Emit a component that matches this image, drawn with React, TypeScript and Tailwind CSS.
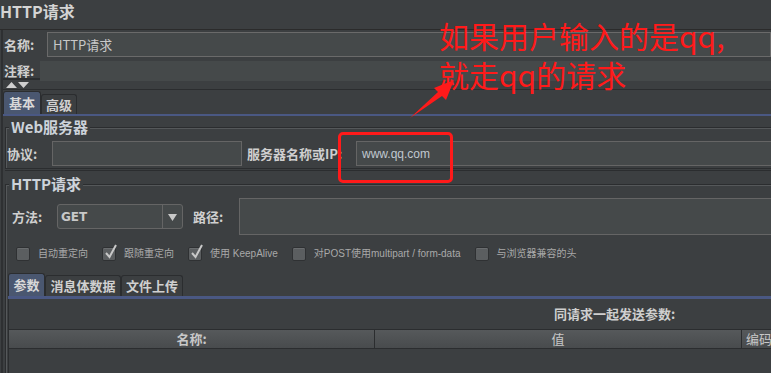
import React from "react";

const F = { fontFamily: '"Noto Sans CJK SC", "Liberation Sans", sans-serif' };

function Box({ checked }: { checked?: boolean }) {
  return (
    <span className="relative w-[14px] h-[14px] bg-[#5b5e60] border border-[#2f3133] rounded-[2px] shrink-0 shadow-[inset_0_1px_0_#6a6d6f]">
      {checked && (
        <svg className="absolute left-[1px] top-[-4px]" width="14" height="16" viewBox="0 0 14 16">
          <path d="M2 9 L5.5 13 L12 1" fill="none" stroke="#c8c8c8" strokeWidth="2" />
        </svg>
      )}
    </span>
  );
}

function Check({ checked, label }: { checked?: boolean; label: string }) {
  return (
    <div className="flex items-center gap-[8px]">
      <Box checked={checked} />
      <span className="text-[10px] text-[#a9a9a9] leading-none whitespace-nowrap" style={{ fontFamily: '"Liberation Sans", "Noto Sans CJK SC", sans-serif' }}>{label}</span>
    </div>
  );
}

export default function App() {
  return (
    <div className="relative w-[771px] h-[373px] bg-[#3c3f41] overflow-hidden text-[#bbbbbb]" style={F}>
      {/* title */}
      <div className="h-[30px] border-b border-[#2b2b2b] flex items-start pt-[1px]">
        <span className="text-[16px] font-bold text-[#d4d4d4] leading-[20px]">HTTP请求</span>
      </div>

      <div className="border-l-2 border-[#2e3032] ml-[1px]">
        {/* name/comment */}
        <div className="h-[50px] border-b-2 border-[#2b2d2f] flex flex-col">
          <div className="flex items-center h-[28px] pt-[2px]">
            <span className="w-[44px] pl-[1px] text-[13px] font-bold text-[#cfcfcf]">名称:</span>
            <div className="flex-1 h-[25px] bg-[#45494a] border border-[#6a6a6a] flex items-center pl-[5px] text-[13px] text-[#c8c8c8]">HTTP请求</div>
          </div>
          <div className="flex items-stretch flex-1 mt-[4px]">
            <span className="w-[37px] pl-[1px] text-[13px] font-bold text-[#cfcfcf] flex items-center">注释:</span>
            <div className="flex-1 bg-[#45494a]" />
          </div>
        </div>
        {/* arrows */}
        <div className="h-[10px] border-b border-[#2b2d2f] flex items-center pl-[2px] gap-0">
          <svg width="26" height="8" viewBox="0 0 26 8">
            <path d="M1 7 L6.5 1 L12 7 Z" fill="#cfcfcf" />
            <path d="M13 1 L24 1 L18.5 7 Z" fill="#cfcfcf" />
          </svg>
        </div>

        {/* tabs basic/advanced */}
        <div className="h-[26px] flex items-end border-b-2 border-[#4a5883]">
          <div className="h-[23px] w-[38px] bg-[#4a5770] border border-[#2b2d2f] border-b-0 rounded-t-[3px] flex items-center justify-center text-[13px] font-bold text-[#d8d8d8]">基本</div>
          <div className="h-[20px] w-[36px] bg-[#3c3f41] border border-[#2b2d2f] border-b-0 rounded-t-[3px] flex items-center justify-center text-[13px] font-bold text-[#d0d0d0]">高级</div>
        </div>

        {/* Web server group */}
        <div className="relative mt-[11px] ml-[2px] h-[42px] border-t border-l border-b border-[#2b2d2f] shadow-[inset_1px_1px_0_#55585a]">
          <span className="absolute left-[3px] top-[-10px] bg-[#3c3f41] px-[2px] text-[15px] font-bold text-[#cdd3da] leading-[17px]">Web服务器</span>
          <div className="flex items-center mt-[13px] h-[25px]">
            <span className="w-[46px] pl-[1px] text-[13px] font-bold text-[#cfcfcf]">协议:</span>
            <div className="w-[190px] h-[25px] bg-[#45494a] border border-[#656565]" />
            <span className="ml-[5px] w-[109px] text-[13px] font-bold text-[#cfcfcf] whitespace-nowrap">服务器名称或IP:</span>
            <div className="flex-1 h-[25px] bg-[#45494a] border border-[#656565] border-r-0 flex items-center pl-[5px] text-[12px] text-[#c0c8d0]" style={{ fontFamily: '"Liberation Sans", sans-serif' }}>www.qq.com</div>
          </div>
        </div>
        <div className="border-b border-[#2b2d2f] ml-[2px] mt-[1px]" />

        {/* HTTP request group */}
        <div className="relative mt-[13px] ml-[2px] h-[200px] border-t border-l border-[#2b2d2f] shadow-[inset_1px_1px_0_#55585a]">
          <span className="absolute left-[3px] top-[-10px] bg-[#3c3f41] px-[2px] text-[15px] font-bold text-[#cdd3da] leading-[17px]">HTTP请求</span>
          <div className="flex items-center mt-[13px] h-[37px]">
            <span className="w-[51px] pl-[6px] text-[13px] font-bold text-[#cfcfcf]">方法:</span>
            <div className="w-[126px] h-[25px] bg-[#45494a] border border-[#656565] rounded-[3px] flex items-center">
              <span className="flex-1 pl-[3px] text-[12px] font-bold text-[#c8c8c8]" style={{ fontFamily: '"DejaVu Sans", sans-serif' }}>GET</span>
              <span className="w-[20px] h-full border-l border-[#656565] flex items-center justify-center">
                <svg width="9" height="8" viewBox="0 0 9 8"><path d="M0 1 L9 1 L4.5 8 Z" fill="#c8c8c8" /></svg>
              </span>
            </div>
            <span className="ml-[10px] w-[46px] text-[13px] font-bold text-[#cfcfcf]">路径:</span>
            <div className="flex-1 h-[37px] bg-[#45494a] border border-[#656565] border-r-0" />
          </div>

          <div className="flex items-center gap-[14px] mt-[11px] pl-[10px] h-[16px]">
            <Check label="自动重定向" />
            <Check checked label="跟随重定向" />
            <Check checked label="使用 KeepAlive" />
            <Check label="对POST使用multipart / form-data" />
            <Check label="与浏览器兼容的头" />
          </div>

          {/* tabs params */}
          <div className="ml-[2px] mt-[12px] h-[25px] flex items-end border-b-[3px] border-[#4a5883]">
            <div className="h-[23px] w-[37px] bg-[#4a5770] border border-[#2b2d2f] border-b-0 rounded-t-[3px] flex items-center justify-center text-[13px] font-bold text-[#d8d8d8]">参数</div>
            <div className="h-[21px] w-[76px] bg-[#3c3f41] border border-[#2b2d2f] border-b-0 rounded-t-[3px] flex items-center justify-center text-[13px] font-bold text-[#d0d0d0]">消息体数据</div>
            <div className="h-[21px] w-[62px] bg-[#3c3f41] border border-[#2b2d2f] border-b-0 rounded-t-[3px] flex items-center justify-center text-[13px] font-bold text-[#d0d0d0]">文件上传</div>
          </div>
          <div className="ml-[2px] border-l border-[#2b2d2f] h-[100px]">
            <div className="h-[30px] flex items-center pl-[545px] text-[13px] font-bold text-[#cfcfcf] whitespace-nowrap">同请求一起发送参数:</div>
            <div className="h-[20px] flex bg-gradient-to-b from-[#56595b] to-[#484b4d] border-t border-b border-[#2b2d2f] text-[13px] text-[#c8c8c8] whitespace-nowrap">
              <div className="w-[366px] shrink-0 border-r border-[#2b2d2f] flex items-center justify-center font-bold">名称:</div>
              <div className="w-[367px] shrink-0 border-r border-[#2b2d2f] flex items-center justify-center">值</div>
              <div className="flex-1 pl-[4px] flex items-center">编码</div>
            </div>
          </div>
        </div>
      </div>

      {/* annotation */}
      <div className="absolute left-[338px] top-[132px] w-[115px] h-[51px] border-[3px] border-[#ff1a1a] rounded-[5px]" />
      <svg className="absolute left-0 top-0" width="771" height="373" viewBox="0 0 771 373">
        <polygon points="410,118 438,92 434,88 454,80 446,100 442,96" fill="#ff1a1a" />
      </svg>
      <div className="absolute left-[439px] top-[16px] text-[30px] leading-[39px] text-[#ff1a1a] whitespace-nowrap" style={{ fontFamily: '"Noto Sans CJK SC", sans-serif' }}>
        <div>如果用户输入的是qq,</div>
        <div>就走qq的请求</div>
      </div>
    </div>
  );
}
